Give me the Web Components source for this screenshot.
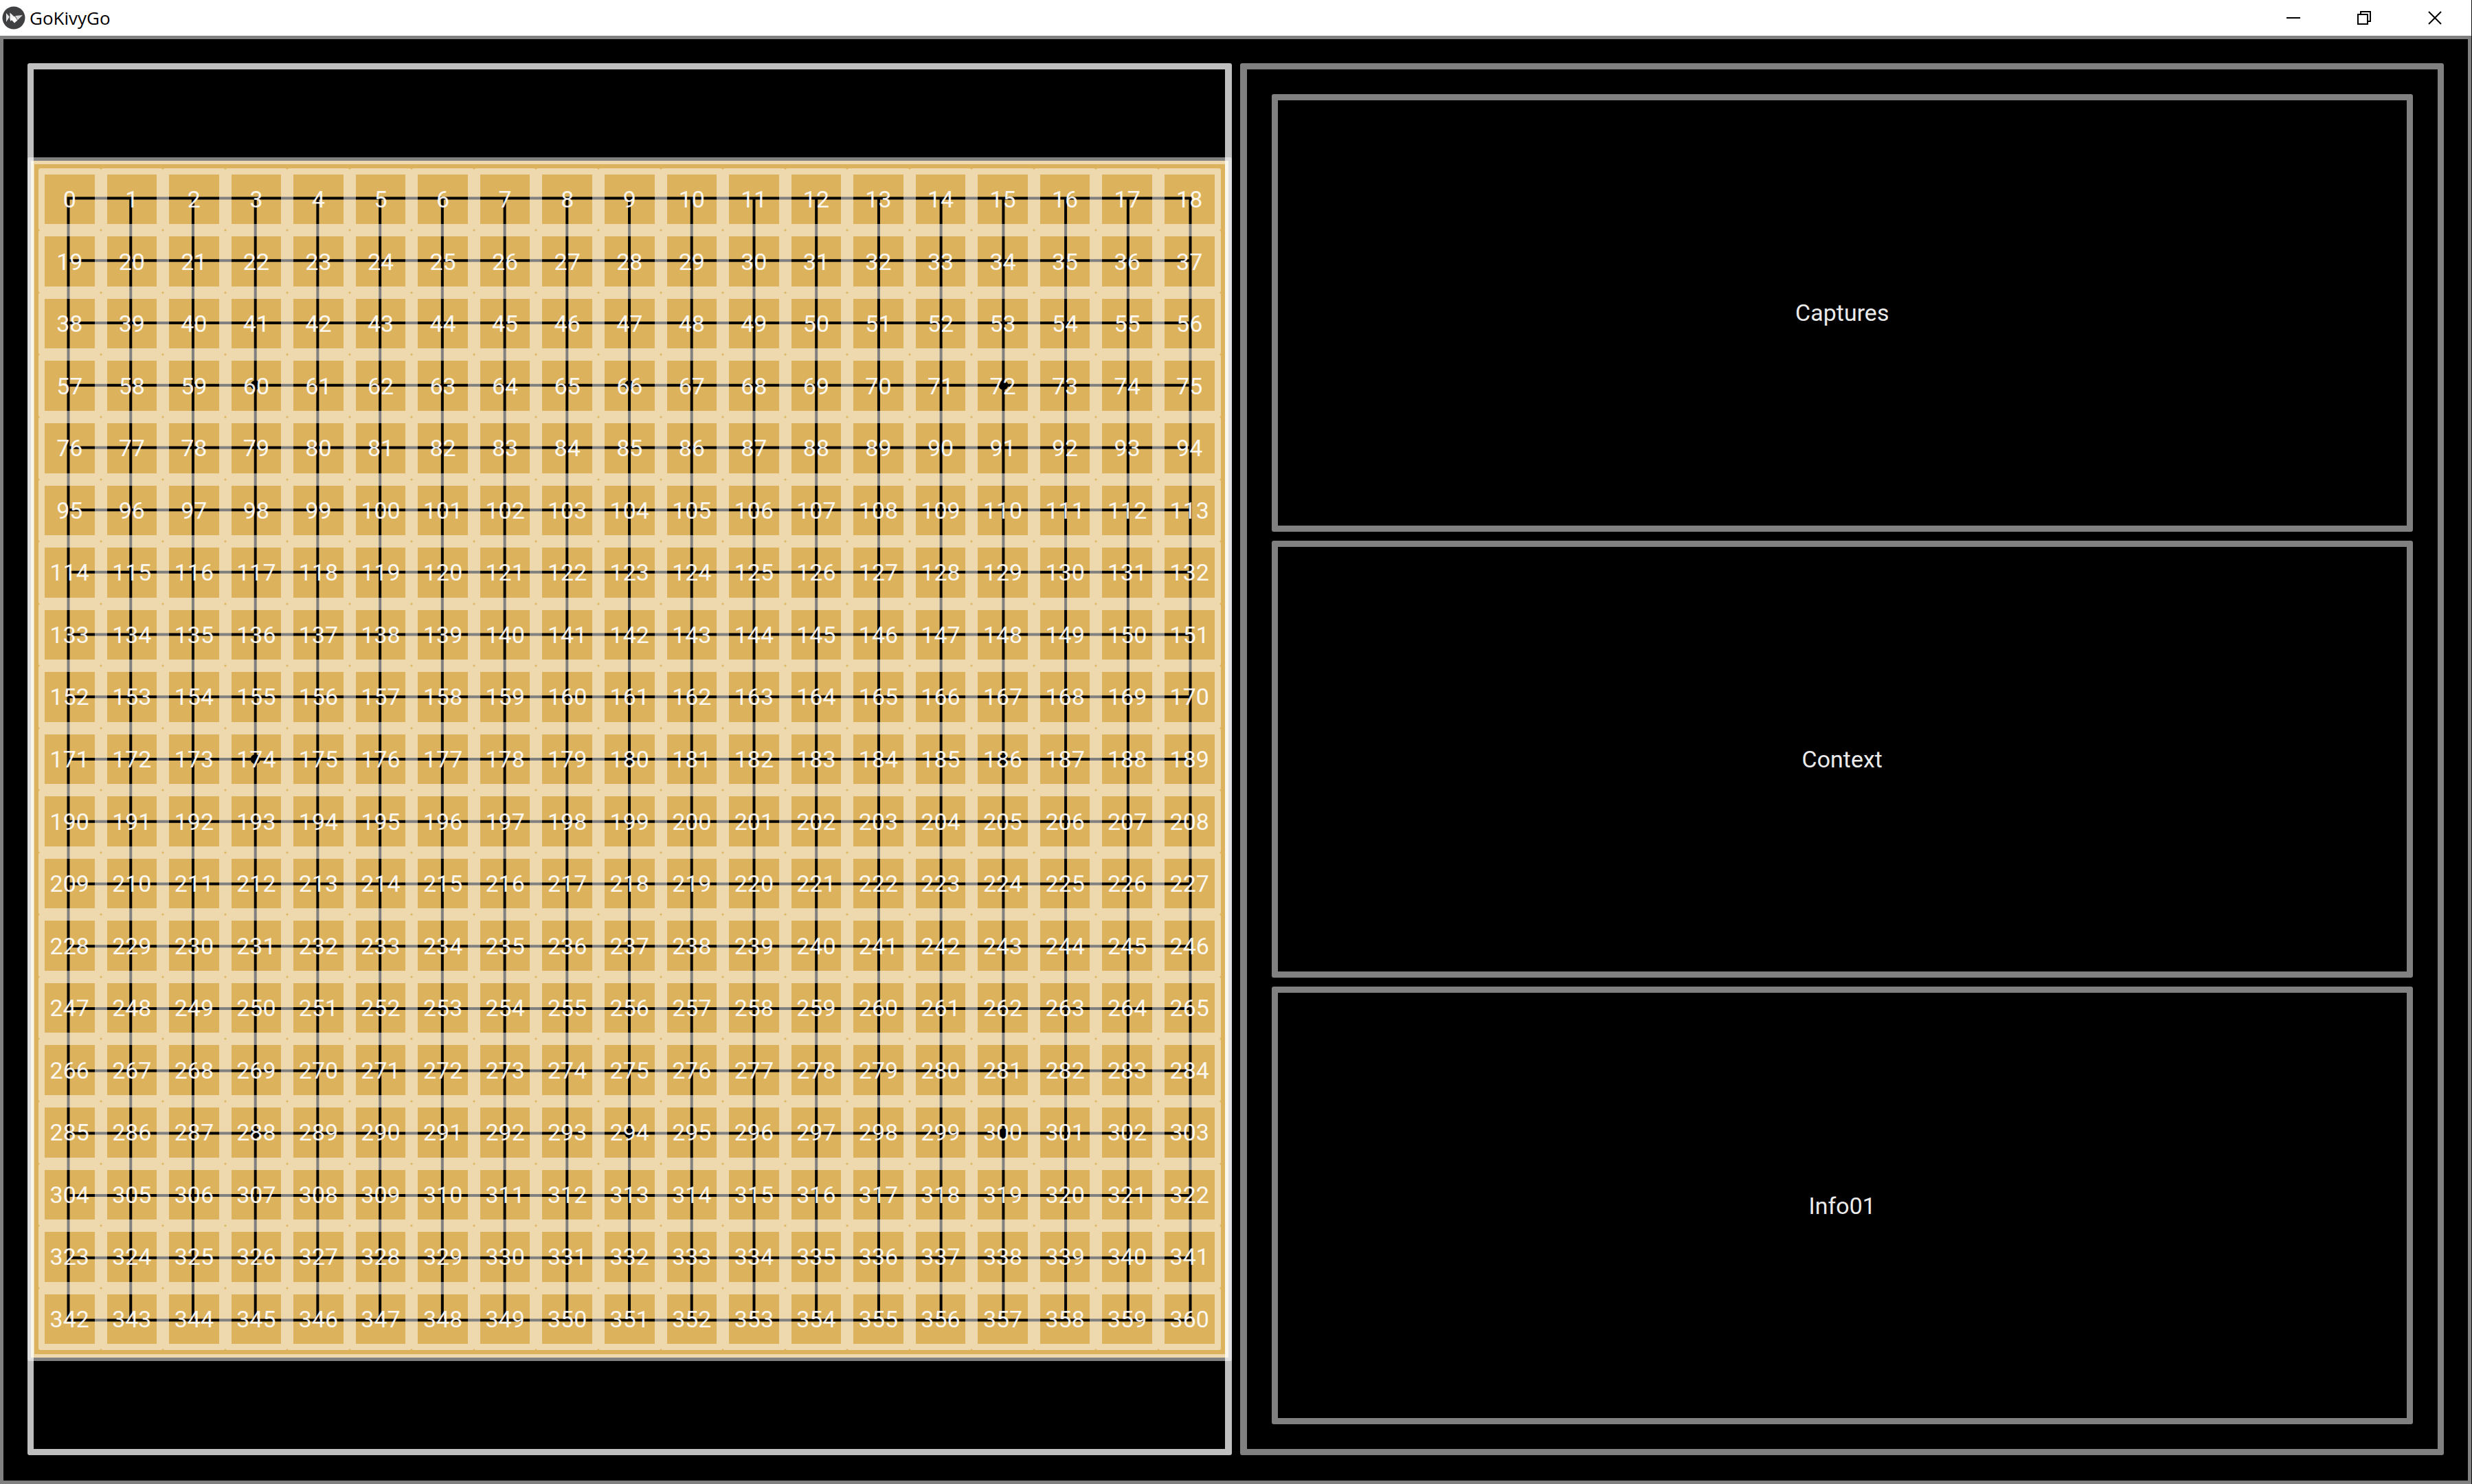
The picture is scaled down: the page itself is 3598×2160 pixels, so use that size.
<!DOCTYPE html>
<html lang="en">
<head>
<meta charset="utf-8">
<title>GoKivyGo</title>
<style>
html, body { height: 100%; margin: 0; background: #000; overflow: hidden; }
body { font-family: Roboto, sans-serif; color: #fff; }
</style>
</head>
<body>
<go-window>
  <title-bar slot="title">GoKivyGo</title-bar>
  <go-pane kind="board"><go-board></go-board></go-pane>
  <go-pane kind="stack">
    <info-box>Captures</info-box>
    <info-box>Context</info-box>
    <info-box>Info01</info-box>
  </go-pane>
</go-window>
<script>
class Base extends HTMLElement {
  constructor() {
    super();
    this.attachShadow({ mode: 'open' }).innerHTML = this.constructor.markup;
  }
}

customElements.define('go-window', class extends Base {
  static markup = `
    <style>
      :host { display: flex; flex-direction: column; height: 100vh; box-sizing: border-box; border-right: 1px solid #111; }
      main { flex: 1; min-height: 0; box-sizing: border-box; display: grid;
             grid-template-columns: 1fr 1fr; gap: 12px; padding: 35px 35px 37px;
             border: 5px solid #808080; }
    </style>
    <slot name="title"></slot>
    <main><slot></slot></main>`;
});

customElements.define('title-bar', class extends Base {
  static markup = `
    <style>
      :host { display: flex; align-items: center; height: 52px; padding-right: 2px; background: #fff; color: #000;
              font: 26px/52px "Open Sans", sans-serif; }
      .logo { width: 34px; height: 34px; margin: 0 6px 0 3px; }
      h1 { font: inherit; margin: 0; flex: 1; }
      button { width: 103px; height: 50px; padding: 0; border: 0; background: none;
               display: flex; align-items: center; justify-content: center; }
      button svg { width: 20px; height: 20px; fill: none; stroke: #000; stroke-width: 2; }
    </style>
    <svg class="logo" viewBox="0 0 34 34" aria-hidden="true">
      <circle cx="17" cy="17" r="16.5" fill="#3f4042"/>
      <path d="M6 10l5 5.500-5 7.500z" fill="#e4e4e4"/>
      <path d="M11.500 9.500l6.500 6-5.500 6.500-1.500-4z" fill="#f2f2f2"/>
      <path d="M13 19l5.500-4.500 4 6-4.500 4z" fill="#fff"/>
      <path d="M19 14l11-1-7.500 7.500z" fill="#d8d8d8"/>
      <path d="M11 12v8M18.500 14l4 6.500" stroke="#3f4042" stroke-width=".7"/>
    </svg>
    <h1><slot></slot></h1>
    <button aria-label="Minimize"><svg viewBox="0 0 20 20"><path d="M0 10h20"/></svg></button>
    <button aria-label="Restore"><svg viewBox="0 0 20 20"><path d="M1 5h14v14H1zM5 5V1h14v14h-4"/></svg></button>
    <button aria-label="Close"><svg viewBox="0 0 20 20"><path d="M1 1l18 18M19 1L1 19"/></svg></button>`;
});

customElements.define('go-pane', class extends Base {
  static markup = `
    <style>
      :host { position: relative; box-sizing: border-box; min-width: 0; min-height: 0; display: flex; flex-direction: column; }
      :host([kind="board"]) { justify-content: center; }
      :host([kind="board"])::after { content: ""; position: absolute; inset: 0; pointer-events: none;
        border: 9px solid rgba(255,255,255,.75); border-right-width: 10px; border-radius: 3px; }
      :host([kind="stack"]) { border: 9px solid #808080; border-left-width: 10px; border-radius: 3px;
        padding: 36px; gap: 13px; }
    </style>
    <slot></slot>`;
});

customElements.define('info-box', class extends Base {
  static markup = `
    <style>
      :host { flex: 1; display: flex; align-items: center; justify-content: center; color: #ebebeb;
              border: 9px solid #808080; border-radius: 3px; font-size: 34px; line-height: 40px; }
    </style>
    <span><slot></slot></span>`;
});

customElements.define('go-board', class extends Base {
  static markup = `
    <style>
      :host { position: relative; display: block; aspect-ratio: 1; box-sizing: border-box; padding: 5px; }
      :host::after { content: ""; position: absolute; inset: 0; border: 10px solid rgba(255,255,255,.5); border-radius: 3px; }
      .wood { box-sizing: border-box; height: 100%; background: #dcb35c; padding: 11px; display: grid; }
      .wood > * { grid-area: 1 / 1; }
      svg { width: 100%; height: 100%; min-width: 0; min-height: 0; }
      .grid { display: grid; grid-template: repeat(19, 1fr) / repeat(19, 1fr); min-width: 0; min-height: 0; }
      .grid div { box-sizing: border-box; border: 9px solid rgba(255,255,255,.5); border-radius: 3px;
                  display: flex; align-items: center; justify-content: center;
                  min-width: 0; min-height: 0; font-size: 34px; line-height: 40px; color: rgba(255,255,255,.92); }
      .grid span { white-space: nowrap; }
    </style>
    <div class="wood">
      <svg viewBox="0 0 1721 1721" aria-hidden="true"></svg>
      <div class="grid"></div>
    </div>`;
  connectedCallback() {
    const n = 19, first = 43.5, step = 90.75, last = first + step * (n - 1);
    let d = '';
    for (let i = 0; i < n; i++) {
      const p = (first + i * step).toFixed(1);
      d += `M${p} ${first - 2}V${last + 2}M${first - 2} ${p}H${last + 2}`;
    }
    const c = k => first + k * step;
    const stars = [3, 9, 15].flatMap(x => [3, 9, 15].map(y => `<circle cx="${c(x)}" cy="${c(y)}" r="7"/>`)).join('');
    this.shadowRoot.querySelector('svg').innerHTML =
      `<path d="${d}" stroke="#000" stroke-width="4" fill="none"/>${stars}`;
    this.shadowRoot.querySelector('.grid').innerHTML =
      Array.from({ length: n * n }, (_, i) => `<div><span>${i}</span></div>`).join('');
  }
});
</script>
</body>
</html>
